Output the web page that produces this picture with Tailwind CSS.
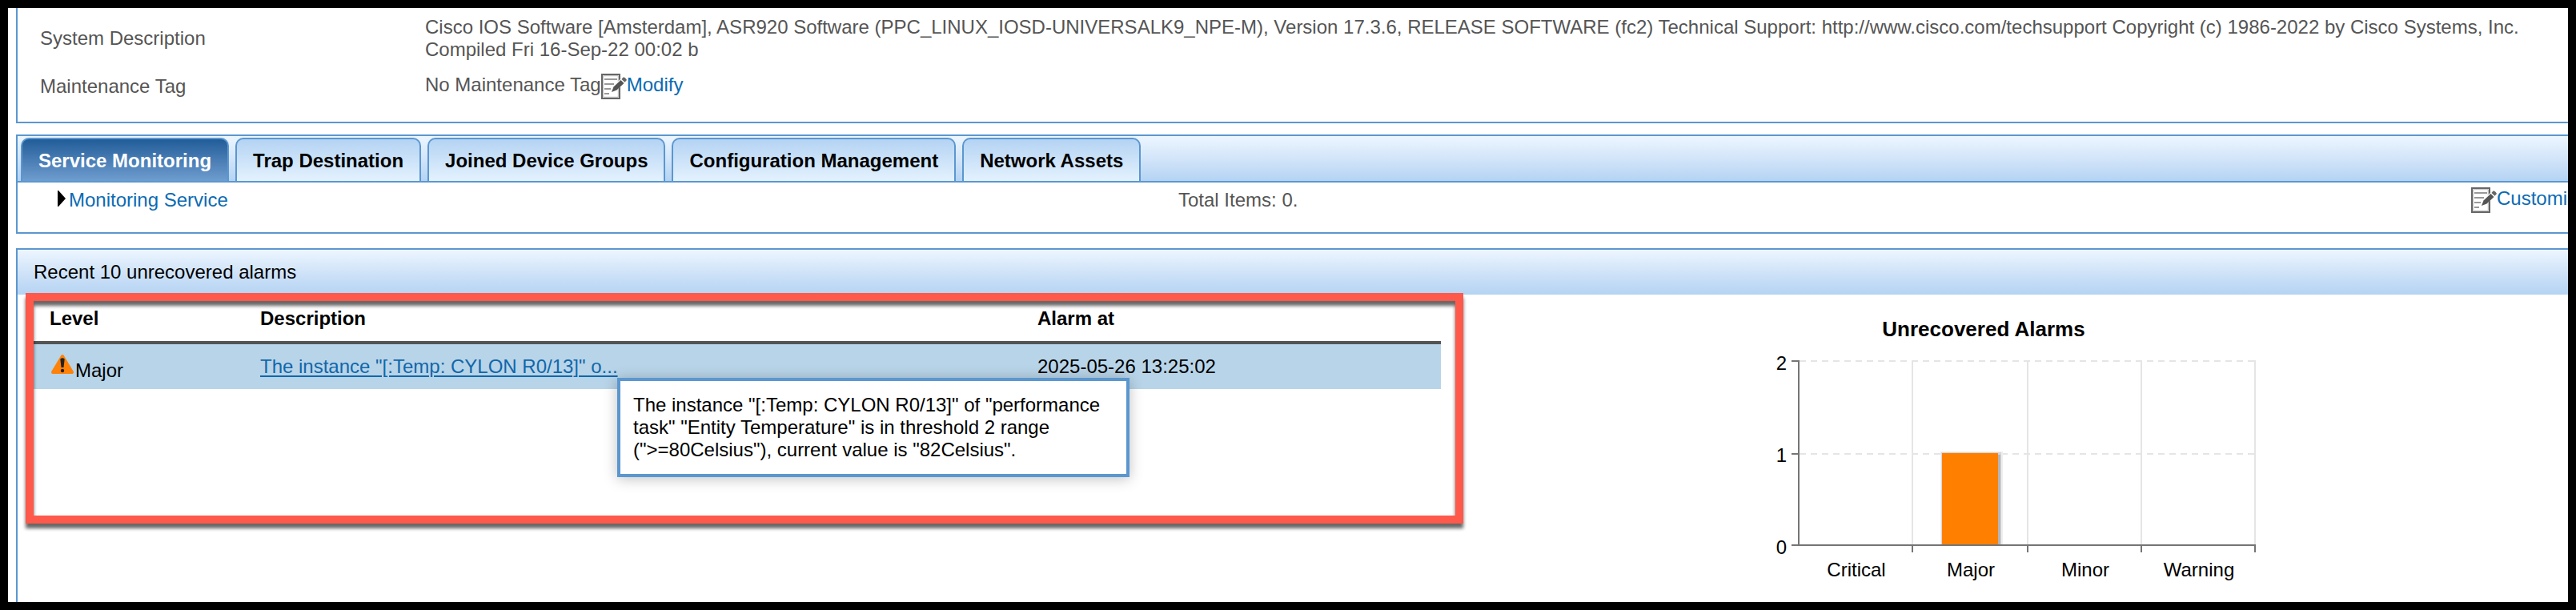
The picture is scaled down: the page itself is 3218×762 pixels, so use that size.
<!DOCTYPE html>
<html lang="en">
<head>
  <meta charset="UTF-8" />
  <meta name="viewport" content="width=device-width, initial-scale=1.0" />
  <title>Device Details</title>
  <script src="https://cdn.jsdelivr.net/npm/@tailwindcss/browser@4"></script>
</head>
<body class="bg-black p-[10px] font-['Liberation_Sans',Arial,sans-serif] text-[24px] leading-[28px] text-black">

  <!-- edit icon, shared by the Modify and Customize links -->
  <svg class="hidden">
    <symbol id="edit" viewBox="0 0 32 32">
      <path d="M1 1H23V31H1Z" fill="#fff" stroke="#666" stroke-width="2" />
      <path d="M2.7 2.7H21.3V29.3H2.7Z" fill="none" stroke="#bbb" stroke-width="1" />
      <path d="M4 7H20M4 13H16M4 19H12M4 25H10" stroke="#999" stroke-width="2" />
      <path d="M13 24L15 15.5L25 6L30 10L20.5 19.5Z" fill="#fff" />
      <path d="M13 23L15.5 16.5L24.5 8L28.5 12L19.5 20.5Z" fill="#555" />
      <path d="M25.5 7L27.5 4.5Q30 4 32 8L29.5 10.8Z" fill="#666" />
    </symbol>
  </svg>

  <main class="h-[742px] w-[3198px] overflow-hidden bg-white pl-[10px]">

    <section class="h-[144px] border-b-2 border-l-2 border-[#5b97cf] pt-[10px] pl-[28px] text-[#555]">
      <div class="flex items-center">
        <div class="w-[481px] shrink-0">System Description</div>
        <div class="whitespace-nowrap">Cisco IOS Software [Amsterdam], ASR920 Software (PPC_LINUX_IOSD-UNIVERSALK9_NPE-M), Version 17.3.6, RELEASE SOFTWARE (fc2) Technical Support: http://www.cisco.com/techsupport Copyright (c) 1986-2022 by Cisco Systems, Inc.<br />Compiled Fri 16-Sep-22 00:02 b</div>
      </div>
      <div class="mt-4 flex items-start">
        <div class="w-[481px] shrink-0 pt-0.5">Maintenance Tag</div>
        <div class="flex">
          <span>No Maintenance Tag</span>
          <svg class="size-8"><use href="#edit" /></svg>
          <a class="text-[#0b6bb3]">Modify</a>
        </div>
      </div>
    </section>

    <section class="mt-[14px] h-[124px] border-y-2 border-l-2 border-[#5b97cf]">
      <nav class="flex h-[58px] gap-2 border-b-2 border-[#5b97cf] bg-linear-to-b from-[#ecf6ff] via-[#d3e5f9] to-[#b4d3f3] pt-0.5 pl-1 font-bold">
        <a class="rounded-t-[10px] border-x-2 border-t-2 border-[#5b97cf] bg-linear-to-b from-[#205d99] to-[#6f9dcf] px-5 pt-[13px] text-white">Service Monitoring</a>
        <a class="rounded-t-[10px] border-x-2 border-t-2 border-[#5b97cf] bg-linear-to-b from-[#b4d3f3] to-[#e4f2fe] px-5 pt-[13px]">Trap Destination</a>
        <a class="rounded-t-[10px] border-x-2 border-t-2 border-[#5b97cf] bg-linear-to-b from-[#b4d3f3] to-[#e4f2fe] px-5 pt-[13px]">Joined Device Groups</a>
        <a class="rounded-t-[10px] border-x-2 border-t-2 border-[#5b97cf] bg-linear-to-b from-[#b4d3f3] to-[#e4f2fe] px-5 pt-[13px]">Configuration Management</a>
        <a class="rounded-t-[10px] border-x-2 border-t-2 border-[#5b97cf] bg-linear-to-b from-[#b4d3f3] to-[#e4f2fe] px-5 pt-[13px]">Network Assets</a>
      </nav>
      <div class="flex items-start pt-1.5 pl-[50px]">
        <div class="flex w-[1400px] gap-1 pt-0.5 text-[#0b6bb3]">
          <svg class="mt-0.5 h-5 w-[10px]" viewBox="0 0 10 20"><path d="M0 0H1L10 10L1 20H0Z" /></svg>
          <a>Monitoring Service</a>
        </div>
        <div class="w-[1615px] pt-0.5 text-[#555]">Total Items: 0.</div>
        <div class="flex w-[121px] shrink-0 overflow-hidden whitespace-nowrap text-[#0b6bb3]">
          <svg class="size-8 shrink-0"><use href="#edit" /></svg>
          <a>Customize</a>
        </div>
      </div>
    </section>

    <section class="relative mt-[18px] h-[460px] border-t-2 border-l-2 border-[#5b97cf]">
      <h2 class="flex h-14 items-center bg-linear-to-b from-[#edf6ff] via-[#d0e3f8] to-[#b4d3f3] pl-5">Recent 10 unrecovered alarms</h2>

      <div class="flex">
        <div class="ml-5 w-[1758px] shrink-0">
          <div class="flex h-[62px] border-b-4 border-[#545454] pt-4 pl-5 font-bold">
            <div class="w-[263px]">Level</div>
            <div class="w-[971px]">Description</div>
            <div>Alarm at</div>
          </div>
          <div class="flex h-14 bg-[#b8d4e8] pt-[14px] pl-5">
            <div class="flex w-[263px]">
              <svg class="-mt-0.5 mr-px ml-px h-[26px] w-[30px]" viewBox="0 0 30 26">
                <path d="M15 3L27 23H3Z" fill="#ff8208" stroke="#ff8208" stroke-width="4" stroke-linejoin="round" />
                <path d="M12.3 6.5Q15 4 17.7 6.5L16.5 17H13.5Z" fill="#222" />
                <circle cx="15" cy="21" r="2.2" fill="#222" />
              </svg>
              <span class="pt-[5px]">Major</span>
            </div>
            <div class="w-[971px]"><a class="text-[#1067ab] underline decoration-2 underline-offset-[3px]">The instance "[:Temp: CYLON R0/13]" o...</a></div>
            <div>2025-05-26 13:25:02</div>
          </div>
        </div>

        <svg class="ml-[380px] h-[384px] w-[700px] shrink-0" viewBox="2180 368 700 384">
          <text x="2478" y="420" text-anchor="middle" font-size="26" font-weight="bold">Unrecovered Alarms</text>
          <path d="M2248 451H2818M2248 567H2818" stroke="#e5e5e5" stroke-width="2" stroke-dasharray="8 6" />
          <path d="M2389 450V680M2533 450V680M2675 450V680M2817 450V680" stroke="#e5e5e5" stroke-width="2" />
          <!-- bar with its soft edge -->
          <path d="M2424 680V564H2502V680Z" fill="#eee" />
          <path d="M2425 680V565H2500V680Z" fill="#d8d8d8" />
          <path d="M2496 568H2499V680H2496Z" fill="#b5b5b5" />
          <rect x="2426" y="566" width="70" height="114" fill="#ff8000" />
          <path d="M2247 450V682M2238 451H2248M2238 567H2248M2238 681H2818M2389 680V690M2533 680V690M2675 680V690M2817 680V690" fill="none" stroke="#757575" stroke-width="2" />
          <g text-anchor="end">
            <text x="2232" y="462">2</text>
            <text x="2232" y="577">1</text>
            <text x="2232" y="692">0</text>
          </g>
          <g text-anchor="middle">
            <text x="2319" y="720">Critical</text>
            <text x="2462" y="720">Major</text>
            <text x="2605" y="720">Minor</text>
            <text x="2747" y="720">Warning</text>
          </g>
        </svg>
      </div>

      <div class="absolute top-[160px] left-[749px] h-[124px] w-[640px] border-4 border-[#5b97cf] bg-white p-4 whitespace-nowrap shadow-[0_2px_16px_rgba(0,0,0,0.25)]">
        The instance "[:Temp: CYLON R0/13]" of "performance<br />task" "Entity Temperature" is in threshold 2 range<br />("&gt;=80Celsius"), current value is "82Celsius".
      </div>
      <div class="pointer-events-none absolute top-[54px] left-[10px] h-[288px] w-[1796px] border-[10px] border-[#ff594b] drop-shadow-[0_6px_2px_rgba(0,0,0,0.6)]"></div>
    </section>
  </main>
</body>
</html>
